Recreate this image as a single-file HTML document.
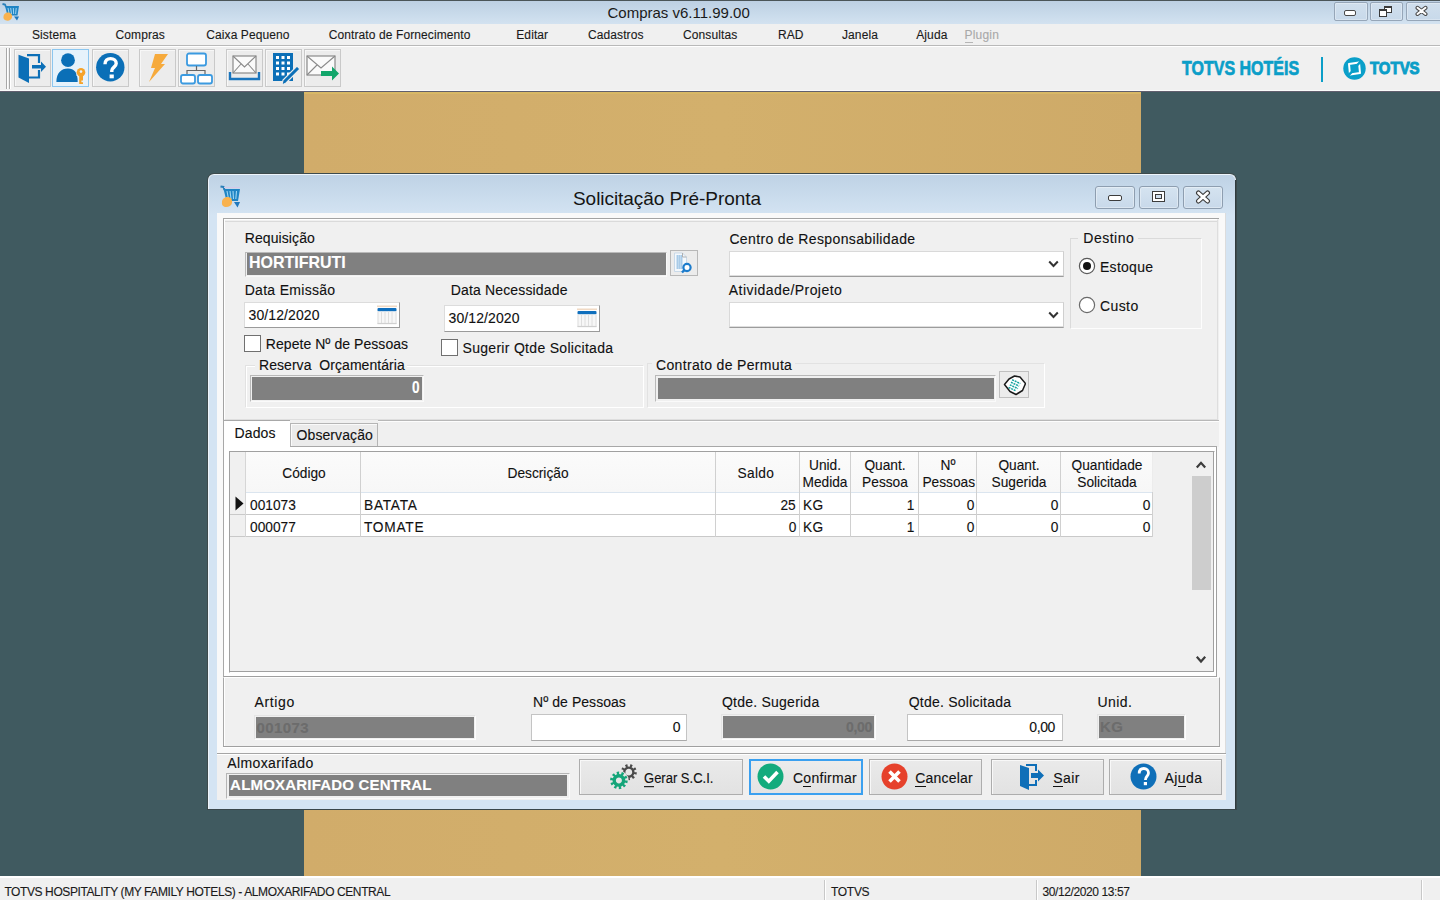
<!DOCTYPE html><html><head><meta charset="utf-8"><style>
html,body{margin:0;padding:0;width:1440px;height:900px;overflow:hidden;}
body{position:relative;background:#405a60;font-family:"Liberation Sans", sans-serif;}
.a{position:absolute;box-sizing:border-box;}
.t{position:absolute;white-space:pre;-webkit-text-stroke:0.12px currentColor;}
u{text-decoration:none;border-bottom:1px solid currentColor;}
</style></head><body>
<div class="a" style="left:304px;top:92px;width:837px;height:784px;background:linear-gradient(90deg,#d1ac6a,#d3b06c 50%,#ceaa68);"></div>
<div class="a" style="left:304px;top:92px;width:837px;height:2px;background:#d8b866;"></div>
<div class="a" style="left:0px;top:0px;width:1440px;height:24px;background:linear-gradient(180deg,#bccfe2 0%,#c9dbeb 60%,#d3e2f0 100%);"></div>
<div class="a" style="left:0px;top:0px;width:1440px;height:1px;background:#4b5558;"></div>
<svg class="a" style="left:2px;top:2px" width="18" height="19" viewBox="0 0 18 19"><path d="M0.5 2 L3 2.5 L4 5" stroke="#2a7fb8" stroke-width="1.8" fill="none"/>
<path d="M3 4 L17 4 L15.5 13.5 L5.5 13.5 Z" fill="#1f84c4"/>
<path d="M6 6 L7.2 12 M8.7 6 L9.5 12 M11.3 6 L11.7 12 M14.2 6 L13.6 12" stroke="#9fd6f2" stroke-width="1"/>
<path d="M1.5 14.5 C1.5 12 4 10 6.8 10.5 C9.5 11 10.5 13 10 15.5 C9.5 18 6.8 19 4.3 18.5 C2.2 18 1 16.5 1.5 14.5 Z" fill="#f9b24e"/>
<path d="M12 14.5 L17 14.5 L15 18.5 Z" fill="#1f78bd"/></svg>
<div class="t" style="left:607.50px;top:4.80px;font-size:15px;line-height:15px;color:#1a1a1a;-webkit-text-stroke:0;">Compras v6.11.99.00</div>
<div class="a" style="left:1334px;top:2px;width:34px;height:19px;border:1px solid #96a6b8;border-radius:2px;background:linear-gradient(180deg,#d0dfed,#c8d9ea);box-shadow:inset 0 0 0 1px rgba(255,255,255,0.3);"></div>
<div class="a" style="left:1344px;top:10px;width:12px;height:6px;border:1px solid #4a4a4a;border-radius:2px;background:#fff;"></div>
<div class="a" style="left:1370px;top:2px;width:33px;height:19px;border:1px solid #96a6b8;border-radius:2px;background:linear-gradient(180deg,#d0dfed,#c8d9ea);box-shadow:inset 0 0 0 1px rgba(255,255,255,0.3);"></div>
<div class="a" style="left:1384px;top:6px;width:8px;height:7px;border:1px solid #3a3a3a;background:#fff;border-top-width:2px;"></div><div class="a" style="left:1379px;top:9px;width:8px;height:8px;border:1px solid #3a3a3a;background:#fff;border-top-width:2px;"></div>
<div class="a" style="left:1406px;top:2px;width:36px;height:19px;border:1px solid #96a6b8;border-radius:2px;background:linear-gradient(180deg,#d0dfed,#c8d9ea);box-shadow:inset 0 0 0 1px rgba(255,255,255,0.3);"></div>

<svg class="a" style="left:1414px;top:5px" width="15" height="12" viewBox="0 0 15 12"><path d="M3.5 2.8 L11.5 9 M11.5 2.8 L3.5 9" stroke="#4a4a4a" stroke-width="4" stroke-linecap="round"/><path d="M3.5 2.8 L11.5 9 M11.5 2.8 L3.5 9" stroke="#fff" stroke-width="2" stroke-linecap="round"/></svg>
<div class="a" style="left:0px;top:24px;width:1440px;height:21px;background:#f0f0f0;"></div>
<div class="a" style="left:0px;top:45px;width:1440px;height:1px;background:#b9b9b9;"></div>
<div class="a" style="left:0px;top:46px;width:1440px;height:1px;background:#ffffff;"></div>
<div class="t" style="left:32.00px;top:28.74px;font-size:12px;line-height:12px;color:#1a1a1a;letter-spacing:0.1px;">Sistema</div>
<div class="t" style="left:115.50px;top:28.74px;font-size:12px;line-height:12px;color:#1a1a1a;letter-spacing:0.1px;">Compras</div>
<div class="t" style="left:206.25px;top:28.74px;font-size:12px;line-height:12px;color:#1a1a1a;letter-spacing:0.1px;">Caixa Pequeno</div>
<div class="t" style="left:328.75px;top:28.74px;font-size:12px;line-height:12px;color:#1a1a1a;letter-spacing:0.1px;">Contrato de Fornecimento</div>
<div class="t" style="left:516.25px;top:28.74px;font-size:12px;line-height:12px;color:#1a1a1a;letter-spacing:0.1px;">Editar</div>
<div class="t" style="left:588.00px;top:28.74px;font-size:12px;line-height:12px;color:#1a1a1a;letter-spacing:0.1px;">Cadastros</div>
<div class="t" style="left:683.00px;top:28.74px;font-size:12px;line-height:12px;color:#1a1a1a;letter-spacing:0.1px;">Consultas</div>
<div class="t" style="left:778.00px;top:28.74px;font-size:12px;line-height:12px;color:#1a1a1a;letter-spacing:0.1px;">RAD</div>
<div class="t" style="left:842.00px;top:28.74px;font-size:12px;line-height:12px;color:#1a1a1a;letter-spacing:0.1px;">Janela</div>
<div class="t" style="left:916.25px;top:28.74px;font-size:12px;line-height:12px;color:#1a1a1a;letter-spacing:0.1px;">Ajuda</div>
<div class="t" style="left:964.50px;top:28.74px;font-size:12px;line-height:12px;color:#a9a9a9;letter-spacing:0.2px;"><u style="border-color:#b5b5b5">P</u>lugin</div>
<div class="a" style="left:0px;top:47px;width:1440px;height:44px;background:#f0f0f0;"></div>
<div class="a" style="left:0px;top:90px;width:1440px;height:1px;background:#fafafa;"></div>
<div class="a" style="left:0px;top:91px;width:1440px;height:1px;background:#615f6e;"></div>
<div class="a" style="left:6px;top:48px;width:1px;height:41px;background:#a8a8a8;"></div>
<div class="a" style="left:7px;top:48px;width:1px;height:41px;background:#ffffff;"></div>
<div class="a" style="left:9px;top:48px;width:1px;height:41px;background:#a8a8a8;"></div>
<div class="a" style="left:10px;top:48px;width:1px;height:41px;background:#ffffff;"></div>
<div class="a" style="left:14px;top:49px;width:37px;height:38px;border:1px solid #c9c9c9;background:#ececec;box-shadow:inset 1px 1px 0 #f7f7f7;"></div>
<div class="a" style="left:52px;top:49px;width:37px;height:38px;border:1px solid #8cc6ef;background:#e6f2fb;"></div>
<div class="a" style="left:92px;top:49px;width:37px;height:38px;border:1px solid #c9c9c9;background:#ececec;box-shadow:inset 1px 1px 0 #f7f7f7;"></div>
<div class="a" style="left:139px;top:49px;width:37px;height:38px;border:1px solid #c9c9c9;background:#ececec;box-shadow:inset 1px 1px 0 #f7f7f7;"></div>
<div class="a" style="left:178px;top:49px;width:37px;height:38px;border:1px solid #c9c9c9;background:#ececec;box-shadow:inset 1px 1px 0 #f7f7f7;"></div>
<div class="a" style="left:226px;top:49px;width:37px;height:38px;border:1px solid #c9c9c9;background:#ececec;box-shadow:inset 1px 1px 0 #f7f7f7;"></div>
<div class="a" style="left:265px;top:49px;width:37px;height:38px;border:1px solid #c9c9c9;background:#ececec;box-shadow:inset 1px 1px 0 #f7f7f7;"></div>
<div class="a" style="left:304px;top:49px;width:37px;height:38px;border:1px solid #c9c9c9;background:#ececec;box-shadow:inset 1px 1px 0 #f7f7f7;"></div>
<svg class="a" style="left:14px;top:49px" width="37" height="38" viewBox="0 0 37 38"><path d="M4.5 5.7 L15 9.5 L15 34 L4.5 28.5 Z" fill="#0b6fb7"/>
<path d="M13 6.2 L25 6.2 L25 14 M25 21 L25 28.5 L15 28.5" fill="none" stroke="#0b6fb7" stroke-width="2.2"/>
<path d="M18 16 L27 16 L27 12.5 L32 17.8 L27 23 L27 19.6 L18 19.6 Z" fill="#0b6fb7"/></svg>
<svg class="a" style="left:52px;top:49px" width="37" height="38" viewBox="0 0 37 38"><circle cx="16" cy="11.2" r="6.9" fill="#0b6fb7"/>
<path d="M4.4 33 C4.4 24 9 19.5 16 19.5 C22 19.5 25.7 23 25.7 33 Z" fill="#0b6fb7"/>
<path d="M24.5 19 L33.5 19 L33.5 27 L24.5 27 Z" fill="#e6f2fb"/>
<circle cx="29" cy="23.2" r="4.3" fill="#f5a32a"/><circle cx="29" cy="22.6" r="1.3" fill="#e6f2fb"/>
<path d="M27.2 26 L27.2 35 L31 35 L31 33.2 L29.4 33.2 L29.4 31.6 L31 31.6 L31 26 Z" fill="#f5a32a"/></svg>
<svg class="a" style="left:92px;top:49px" width="37" height="38" viewBox="0 0 37 38"><circle cx="18.3" cy="18.3" r="14.2" fill="#0b6fb7"/>
<path d="M13 15.2 C13 11.6 15.3 9.6 18.6 9.6 C21.9 9.6 24.2 11.8 24.2 14.6 C24.2 17.8 19.8 18.4 19.8 21.6 L19.8 23" fill="none" stroke="#fff" stroke-width="3.4"/>
<rect x="17.6" y="25.5" width="4.2" height="3.8" fill="#fff"/></svg>
<svg class="a" style="left:139px;top:49px" width="37" height="38" viewBox="0 0 37 38"><path d="M16 5 L29 5 L22 15 L26 15 L10 33 L16 19 L12 19 Z" fill="#f6aa3c"/></svg>
<svg class="a" style="left:178px;top:49px" width="37" height="38" viewBox="0 0 37 38"><rect x="9" y="4.5" width="19" height="12" rx="2" fill="#fff" stroke="#3b9ae0" stroke-width="1.8"/>
<path d="M18.5 17 L18.5 21 M9 25 L9 21.5 L27 21.5 L27 25" fill="none" stroke="#666" stroke-width="1.2"/>
<rect x="3" y="26" width="14" height="8.5" rx="2" fill="#fff" stroke="#3b9ae0" stroke-width="1.8"/>
<rect x="20" y="26" width="14" height="8.5" rx="2" fill="#fff" stroke="#3b9ae0" stroke-width="1.8"/></svg>
<svg class="a" style="left:226px;top:49px" width="37" height="38" viewBox="0 0 37 38"><rect x="7" y="7" width="23" height="17" fill="#fafafa" stroke="#8a8a8a" stroke-width="1.2"/>
<path d="M7 7 L18.5 18 L30 7 M7 24 L15 15 M30 24 L22 15" fill="none" stroke="#8a8a8a" stroke-width="1.1"/>
<path d="M4 23 L4 30 L33 30 L33 23" fill="none" stroke="#1a75bd" stroke-width="2.4"/></svg>
<svg class="a" style="left:265px;top:49px" width="37" height="38" viewBox="0 0 37 38"><rect x="8" y="4" width="20" height="28" fill="#0b6fb7"/>
<g fill="#fff"><rect x="11.0" y="7.0" width="3" height="3"/><rect x="16.5" y="7.0" width="3" height="3"/><rect x="22.0" y="7.0" width="3" height="3"/><rect x="11.0" y="12.5" width="3" height="3"/><rect x="16.5" y="12.5" width="3" height="3"/><rect x="22.0" y="12.5" width="3" height="3"/><rect x="11.0" y="18.0" width="3" height="3"/><rect x="16.5" y="18.0" width="3" height="3"/><rect x="22.0" y="18.0" width="3" height="3"/><rect x="11.0" y="23.5" width="3" height="3"/><rect x="16.5" y="23.5" width="3" height="3"/><rect x="22.0" y="23.5" width="3" height="3"/></g>
<path d="M17 36 L18 31 L32 17 L35 20 L21 34 Z" fill="#0b6fb7" stroke="#ececec" stroke-width="1.2"/></svg>
<svg class="a" style="left:304px;top:49px" width="37" height="38" viewBox="0 0 37 38"><rect x="3" y="7" width="28" height="19" fill="#fafafa" stroke="#8a8a8a" stroke-width="1.2"/>
<path d="M3 7 L17 19 L31 7 M3 26 L13 16" fill="none" stroke="#8a8a8a" stroke-width="1.1"/>
<path d="M17 22 L28 22 L28 17.5 L35 24.5 L28 31.5 L28 27 L17 27 Z" fill="#12a66b"/></svg>
<div class="t" style="left:1182.00px;top:58.37px;font-size:20px;line-height:20px;color:#0b9ec8;font-weight:700;transform:scaleX(0.80);transform-origin:0 0;-webkit-text-stroke:0.7px currentColor;">TOTVS HOTÉIS</div>
<div class="a" style="left:1321px;top:57px;width:2px;height:25px;background:#0b9ec8;"></div>
<svg class="a" style="left:1343px;top:57px" width="23" height="23" viewBox="0 0 23 23"><circle cx="11.5" cy="11.5" r="11.2" fill="#0a9fc9"/><path d="M6 7 L16 5.5 L17 16 L7 17.5 Z" fill="none" stroke="#fff" stroke-width="2" stroke-linejoin="round"/><path d="M8.6 9.2 L14 8.4 L14.6 13.6 L9.2 14.4 Z" fill="#0a9fc9"/><path d="M18.5 3.5 L14.5 8 M4.5 19.5 L8.5 15" stroke="#0a9fc9" stroke-width="2.6"/></svg>
<div class="t" style="left:1370.40px;top:60.11px;font-size:17px;line-height:17px;color:#0b9ec8;font-weight:700;transform:scaleX(0.88);transform-origin:0 0;-webkit-text-stroke:1px currentColor;">TOTVS</div>
<div class="a" style="left:0px;top:876px;width:1440px;height:24px;background:#f0f0f0;"></div>
<div class="a" style="left:0px;top:876px;width:1440px;height:2px;background:#ffffff;"></div>
<div class="t" style="left:4.40px;top:885.64px;font-size:12px;line-height:12px;color:#1a1a1a;letter-spacing:-0.4px;">TOTVS HOSPITALITY (MY FAMILY HOTELS) - ALMOXARIFADO CENTRAL</div>
<div class="a" style="left:824px;top:880px;width:1px;height:20px;background:#c8c8c8;"></div>
<div class="a" style="left:825px;top:880px;width:1px;height:20px;background:#fff;"></div>
<div class="a" style="left:1036px;top:880px;width:1px;height:20px;background:#c8c8c8;"></div>
<div class="a" style="left:1037px;top:880px;width:1px;height:20px;background:#fff;"></div>
<div class="a" style="left:1421px;top:880px;width:1px;height:20px;background:#c8c8c8;"></div>
<div class="a" style="left:1422px;top:880px;width:1px;height:20px;background:#fff;"></div>
<div class="t" style="left:831.00px;top:885.64px;font-size:12px;line-height:12px;color:#1a1a1a;letter-spacing:-0.3px;">TOTVS</div>
<div class="t" style="left:1042.50px;top:885.64px;font-size:12px;line-height:12px;color:#1a1a1a;letter-spacing:-0.4px;">30/12/2020 13:57</div>
<div class="a" style="left:207px;top:173px;width:1030px;height:637px;border-radius:7px 7px 0 0;background:#3d4a4c;"></div>
<div class="a" style="left:208px;top:174px;width:1028px;height:635px;border-radius:6px 6px 0 0;background:linear-gradient(180deg,#bfd2e5 0px,#c9dbec 20px,#d3e3f2 39px,#d4e4f3 40px);border:1px solid #eef5fb;border-bottom:none;"></div>
<div class="a" style="left:1235px;top:180px;width:1px;height:629px;background:#2f3b3e;"></div>
<div class="a" style="left:207px;top:809px;width:1030px;height:1px;background:#3a474b;"></div>
<svg class="a" style="left:220px;top:184px" width="21" height="24" viewBox="0 0 21 24"><path d="M0.5 2.5 L3.5 3 L4.5 6" stroke="#2a7fb8" stroke-width="2" fill="none"/>
<path d="M3.5 5 L20 5 L18 17 L6.5 17 Z" fill="#1f84c4"/>
<path d="M7 7 L8.5 15 M10 7 L11 15 M13 7 L13.5 15 M16.5 7 L15.8 15" stroke="#9fd6f2" stroke-width="1.1"/>
<path d="M4 3.5 L20 3.5" stroke="#d6c8e8" stroke-width="1"/>
<path d="M2 18 C2 15 5 12.5 8 13 C11.5 13.5 12.5 16 12 19 C11.5 22 8 23.5 5 23 C2.5 22.5 1.5 20.5 2 18 Z" fill="#f9b24e"/>
<path d="M14 18 L20 18 L17.5 23.5 Z" fill="#1f78bd"/></svg>
<div class="t" style="left:573.00px;top:188.92px;font-size:19px;line-height:19px;color:#151515;letter-spacing:-0.05px;-webkit-text-stroke:0;">Solicitação Pré-Pronta</div>
<div class="a" style="left:1095px;top:186px;width:40px;height:23px;border:1px solid #8e9eb0;border-radius:3px;background:linear-gradient(180deg,#d5e3f0,#c8d9ea);box-shadow:inset 0 0 0 1px rgba(255,255,255,0.35);"></div>
<div class="a" style="left:1108px;top:195px;width:14px;height:6px;border:1px solid #3c3c3c;border-radius:2px;background:#fff;"></div>
<div class="a" style="left:1139px;top:186px;width:40px;height:23px;border:1px solid #8e9eb0;border-radius:3px;background:linear-gradient(180deg,#d5e3f0,#c8d9ea);box-shadow:inset 0 0 0 1px rgba(255,255,255,0.35);"></div>
<div class="a" style="left:1152px;top:191px;width:13px;height:11px;border:1px solid #3c3c3c;background:#fff;"></div><div class="a" style="left:1155px;top:194px;width:7px;height:5px;border:1px solid #3c3c3c;background:#d0dfee;"></div>
<div class="a" style="left:1183px;top:186px;width:40px;height:23px;border:1px solid #8e9eb0;border-radius:3px;background:linear-gradient(180deg,#d5e3f0,#c8d9ea);box-shadow:inset 0 0 0 1px rgba(255,255,255,0.35);"></div>

<svg class="a" style="left:1195px;top:190px" width="16" height="14" viewBox="0 0 16 14"><path d="M3.5 3 L12.5 11 M12.5 3 L3.5 11" stroke="#3c3c3c" stroke-width="5" stroke-linecap="round"/><path d="M3.5 3 L12.5 11 M12.5 3 L3.5 11" stroke="#fff" stroke-width="2.8" stroke-linecap="round"/></svg>
<div class="a" style="left:217px;top:213px;width:1009px;height:587px;background:#f0f0f0;"></div>
<div class="a" style="left:217px;top:213px;width:1009px;height:540px;background:#f9f9f9;"></div>
<div class="a" style="left:1225px;top:213px;width:1px;height:540px;background:#dcdcdc;"></div>
<div class="a" style="left:223px;top:218px;width:996px;height:229px;background:#f0f0f0;border-left:1px solid #a3a3a3;border-top:1px solid #a3a3a3;"></div>
<div class="a" style="left:224px;top:219px;width:994px;height:201px;border-left:1px solid #fff;border-top:1px solid #fff;border-right:1px solid #dedede;border-bottom:1px solid #dedede;"></div>
<div class="a" style="left:225px;top:221px;width:992px;height:1px;background:#dadada;"></div>
<div class="t" style="left:244.70px;top:231.45px;font-size:14px;line-height:14px;color:#111;letter-spacing:0.1px;">Requisição</div>
<div class="a" style="left:245px;top:252px;width:422px;height:25px;border:1px solid #b9b9b9;border-right-color:#f8f8f8;border-bottom-color:#f8f8f8;"></div>
<div class="a" style="left:247px;top:253px;width:419px;height:22px;background:#808080;"></div>
<div class="t" style="left:248.75px;top:254.01px;font-size:17px;line-height:17px;color:#fff;font-weight:700;transform:scaleX(0.94);transform-origin:0 0;">HORTIFRUTI</div>
<div class="a" style="left:670px;top:250px;width:28px;height:26px;border:1px solid #b8b8b8;background:#ececec;"></div>
<svg class="a" style="left:673px;top:252px" width="22" height="22" viewBox="0 0 22 22"><path d="M1.5 1 L9.5 1 L13.5 5 L13.5 19.5 L1.5 19.5 Z" fill="#f4f8fc" stroke="#c9d9e8" stroke-width="1"/>
<rect x="3.5" y="3" width="6" height="14" fill="#a9cbe8"/><path d="M5.5 3v14M7.5 3v14" stroke="#c4dcf0" stroke-width="0.8"/>
<path d="M9.5 1 L9.5 5 L13.5 5" fill="none" stroke="#b0b0b0" stroke-width="1"/>
<circle cx="14" cy="15.5" r="3.6" fill="#fff" stroke="#1d7ccc" stroke-width="2.2"/><path d="M11.3 18.2 L9 20.5" stroke="#1d7ccc" stroke-width="2.4"/></svg>
<div class="t" style="left:244.70px;top:283.45px;font-size:14px;line-height:14px;color:#111;letter-spacing:0.3px;">Data Emissão</div>
<div class="a" style="left:244px;top:302px;width:156px;height:26px;background:#fff;border:1px solid #dcdcdc;border-right-color:#9a9a9a;border-bottom-color:#9a9a9a;"></div>
<div class="t" style="left:248.50px;top:307.95px;font-size:14px;line-height:14px;color:#111;letter-spacing:0.1px;">30/12/2020</div>
<svg class="a" style="left:377px;top:305px" width="20" height="20" viewBox="0 0 20 20"><rect x="0" y="0.5" width="20" height="1.6" fill="#f0d9c4"/>
<rect x="0.5" y="3" width="19" height="3.4" rx="1" fill="#0f6fbd"/>
<rect x="0.5" y="6.4" width="19" height="13" fill="#f7f7f7"/>
<path d="M1 6.5V19M4.5 6.5V19M8 6.5V19M11.5 6.5V19M15 6.5V19M19 6.5V19" stroke="#dedede" stroke-width="1"/>
<path d="M0.5 18.5H19.5" stroke="#d0d0d0" stroke-width="1.2"/></svg>
<div class="t" style="left:450.80px;top:283.45px;font-size:14px;line-height:14px;color:#111;letter-spacing:0.15px;">Data Necessidade</div>
<div class="a" style="left:444px;top:305px;width:156px;height:27px;background:#fff;border:1px solid #dcdcdc;border-right-color:#9a9a9a;border-bottom-color:#9a9a9a;"></div>
<div class="t" style="left:448.50px;top:310.95px;font-size:14px;line-height:14px;color:#111;letter-spacing:0.1px;">30/12/2020</div>
<svg class="a" style="left:577px;top:308px" width="20" height="20" viewBox="0 0 20 20"><rect x="0" y="0.5" width="20" height="1.6" fill="#f0d9c4"/>
<rect x="0.5" y="3" width="19" height="3.4" rx="1" fill="#0f6fbd"/>
<rect x="0.5" y="6.4" width="19" height="13" fill="#f7f7f7"/>
<path d="M1 6.5V19M4.5 6.5V19M8 6.5V19M11.5 6.5V19M15 6.5V19M19 6.5V19" stroke="#dedede" stroke-width="1"/>
<path d="M0.5 18.5H19.5" stroke="#d0d0d0" stroke-width="1.2"/></svg>
<div class="a" style="left:244px;top:335px;width:17px;height:17px;border:1px solid #707070;background:#fff;"></div>
<div class="t" style="left:265.80px;top:337.35px;font-size:14px;line-height:14px;color:#111;letter-spacing:0.05px;">Repete Nº de Pessoas</div>
<div class="a" style="left:441px;top:339px;width:17px;height:17px;border:1px solid #707070;background:#fff;"></div>
<div class="t" style="left:462.50px;top:341.15px;font-size:14px;line-height:14px;color:#111;letter-spacing:0.3px;">Sugerir Qtde Solicitada</div>
<div class="a" style="left:245px;top:365px;width:399px;height:43px;border:1px solid #e2e2e2;border-right-color:#fff;border-bottom-color:#fff;box-shadow:1px 1px 0 #fff inset;"></div>
<div class="a" style="left:255px;top:360px;width:152px;height:8px;background:#f0f0f0;"></div>
<div class="t" style="left:259.00px;top:357.85px;font-size:14px;line-height:14px;color:#111;letter-spacing:0.05px;">Reserva  Orçamentária</div>
<div class="a" style="left:250px;top:375px;width:174px;height:27px;border:1px solid #b9b9b9;border-right-color:#fafafa;border-bottom-color:#fafafa;"></div>
<div class="a" style="left:252px;top:377px;width:170px;height:23px;background:#808080;"></div>
<div class="t" style="right:1020.50px;top:378.61px;font-size:17px;line-height:17px;color:#fff;font-weight:700;transform:scaleX(0.8);transform-origin:100% 0;">0</div>
<div class="a" style="left:647px;top:363px;width:398px;height:45px;border:1px solid #e2e2e2;border-right-color:#fff;border-bottom-color:#fff;"></div>
<div class="a" style="left:652px;top:358px;width:143px;height:8px;background:#f0f0f0;"></div>
<div class="t" style="left:656.00px;top:358.15px;font-size:14px;line-height:14px;color:#111;letter-spacing:0.33px;">Contrato de Permuta</div>
<div class="a" style="left:655px;top:375px;width:341px;height:27px;border:1px solid #b9b9b9;border-right-color:#fafafa;border-bottom-color:#fafafa;"></div>
<div class="a" style="left:658px;top:378px;width:336px;height:21px;background:#808080;"></div>
<div class="a" style="left:999px;top:371px;width:30px;height:27px;border:1px solid #c0c0c0;background:#ececec;"></div>
<svg class="a" style="left:1002px;top:373px" width="24" height="23" viewBox="0 0 24 23"><path d="M2.5 11.5 L7 6 L12.5 3 L18 4 L23.5 10.5 L20.5 17.5 L14 21.5 L8 18.5 Z" fill="#fff" stroke="#1a1a1a" stroke-width="1.5" stroke-linejoin="round"/>
<g transform="rotate(25 13 12.5)"><path d="M8 8.5h9M8 11.3h9M8 14.1h9M8 16.9h8" stroke="#14a3a0" stroke-width="1.5" stroke-dasharray="2 0.8"/></g></svg>
<div class="t" style="left:729.40px;top:231.90px;font-size:14px;line-height:14px;color:#111;letter-spacing:0.36px;">Centro de Responsabilidade</div>
<div class="a" style="left:729px;top:251px;width:335px;height:26px;background:#fff;border:1px solid #d9d9d9;border-bottom:1px solid #9c9c9c;border-right-color:#cfcfcf;box-shadow:inset 0 -1px 0 #dedede;"></div>
<svg class="a" style="left:1048px;top:260px" width="11" height="8" viewBox="0 0 11 8"><path d="M1.2 1.5 L5.5 6 L9.8 1.5" fill="none" stroke="#333" stroke-width="2"/></svg>
<div class="t" style="left:728.75px;top:282.65px;font-size:14px;line-height:14px;color:#111;letter-spacing:0.45px;">Atividade/Projeto</div>
<div class="a" style="left:729px;top:302px;width:335px;height:26px;background:#fff;border:1px solid #d9d9d9;border-bottom:1px solid #9c9c9c;border-right-color:#cfcfcf;box-shadow:inset 0 -1px 0 #dedede;"></div>
<svg class="a" style="left:1048px;top:311px" width="11" height="8" viewBox="0 0 11 8"><path d="M1.2 1.5 L5.5 6 L9.8 1.5" fill="none" stroke="#333" stroke-width="2"/></svg>
<div class="a" style="left:1070px;top:238px;width:132px;height:91px;border:1px solid #dadada;border-right-color:#fdfdfd;border-bottom-color:#fdfdfd;"></div>
<div class="a" style="left:1078px;top:232px;width:60px;height:10px;background:#f0f0f0;"></div>
<div class="t" style="left:1083.30px;top:231.45px;font-size:14px;line-height:14px;color:#111;letter-spacing:0.5px;">Destino</div>
<svg class="a" style="left:1078px;top:257px" width="18" height="18" viewBox="0 0 18 18"><circle cx="9" cy="9" r="7.6" fill="#fff" stroke="#5a5a5a" stroke-width="1.2"/><circle cx="9" cy="9" r="4" fill="#111"/></svg>
<div class="t" style="left:1100.00px;top:260.35px;font-size:14px;line-height:14px;color:#111;letter-spacing:0.27px;">Estoque</div>
<svg class="a" style="left:1078px;top:296px" width="18" height="18" viewBox="0 0 18 18"><circle cx="9" cy="9" r="7.6" fill="#fff" stroke="#6a6a6a" stroke-width="1.2"/></svg>
<div class="t" style="left:1100.00px;top:298.85px;font-size:14px;line-height:14px;color:#111;letter-spacing:0.4px;">Custo</div>
<div class="a" style="left:223px;top:420px;width:67px;height:28px;background:#fff;border-left:1px solid #a8a8a8;border-top:1px solid #a8a8a8;"></div>
<div class="t" style="left:234.60px;top:426.05px;font-size:14px;line-height:14px;color:#111;letter-spacing:0.1px;">Dados</div>
<div class="a" style="left:290px;top:423px;width:88px;height:24px;background:#ebebeb;border:1px solid #b5b5b5;border-bottom:none;box-shadow:inset 1px 1px 0 #fafafa;"></div>
<div class="t" style="left:296.50px;top:428.45px;font-size:14px;line-height:14px;color:#111;letter-spacing:0.1px;">Observação</div>
<div class="a" style="left:290px;top:446px;width:927px;height:1px;background:#a8a8a8;"></div>
<div class="a" style="left:378px;top:420px;width:841px;height:1px;background:#b8b8b8;"></div>
<div class="a" style="left:378px;top:421px;width:841px;height:1px;background:#fdfdfd;"></div>
<div class="a" style="left:223px;top:447px;width:994px;height:230px;background:#fff;border-left:1px solid #a8a8a8;border-right:1px solid #a0a0a0;border-bottom:1px solid #a0a0a0;"></div>
<div class="a" style="left:229px;top:451px;width:986px;height:222px;background:#f0f0f0;border:1px solid #a0a0a0;border-right-color:#fff;border-bottom-color:#fff;box-shadow:inset -1px -1px 0 #a0a0a0;"></div>
<div class="a" style="left:246px;top:452px;width:907px;height:40px;background:linear-gradient(180deg,#fbfbfb,#f7f7f7);"></div>
<div class="a" style="left:246px;top:492px;width:907px;height:1px;background:#dbe5ef;"></div>
<div class="a" style="left:230px;top:492px;width:16px;height:45px;background:#f0f0f0;"></div>
<div class="a" style="left:246px;top:493px;width:907px;height:44px;background:#fff;"></div>
<div class="a" style="left:230px;top:514px;width:923px;height:1px;background:#c9c9c9;"></div>
<div class="a" style="left:230px;top:536px;width:923px;height:1px;background:#c9c9c9;"></div>
<div class="a" style="left:360px;top:452px;width:1px;height:85px;background:#d0d0d0;"></div>
<div class="a" style="left:714.5px;top:452px;width:1px;height:85px;background:#d0d0d0;"></div>
<div class="a" style="left:798.5px;top:452px;width:1px;height:85px;background:#d0d0d0;"></div>
<div class="a" style="left:849.5px;top:452px;width:1px;height:85px;background:#d0d0d0;"></div>
<div class="a" style="left:917.5px;top:452px;width:1px;height:85px;background:#d0d0d0;"></div>
<div class="a" style="left:975.5px;top:452px;width:1px;height:85px;background:#d0d0d0;"></div>
<div class="a" style="left:1060px;top:452px;width:1px;height:85px;background:#d0d0d0;"></div>
<div class="a" style="left:1152px;top:452px;width:1px;height:85px;background:#d0d0d0;"></div>
<div class="a" style="left:1152px;top:452px;width:1px;height:40px;background:#ececec;"></div>
<div class="a" style="left:245px;top:452px;width:1px;height:85px;background:#d6d6d6;"></div>
<div class="t" style="left:248.50px;width:110px;text-align:center;top:465.10px;font-size:15px;line-height:15px;color:#111;transform:scaleX(0.915);transform-origin:50% 0;">Código</div>
<div class="t" style="left:368.00px;width:340px;text-align:center;top:465.10px;font-size:15px;line-height:15px;color:#111;transform:scaleX(0.915);transform-origin:50% 0;">Descrição</div>
<div class="t" style="right:665.80px;top:465.10px;font-size:15px;line-height:15px;color:#111;letter-spacing:0.4px;transform:scaleX(0.915);transform-origin:100% 0;">Saldo</div>
<div class="t" style="left:800.00px;width:50px;text-align:center;top:457.30px;font-size:15px;line-height:15px;color:#111;transform:scaleX(0.915);transform-origin:50% 0;">Unid.</div>
<div class="t" style="left:800.00px;width:50px;text-align:center;top:474.00px;font-size:15px;line-height:15px;color:#111;transform:scaleX(0.915);transform-origin:50% 0;">Medida</div>
<div class="t" style="left:851.60px;width:66px;text-align:center;top:457.30px;font-size:15px;line-height:15px;color:#111;transform:scaleX(0.915);transform-origin:50% 0;">Quant.</div>
<div class="t" style="left:851.60px;width:66px;text-align:center;top:474.00px;font-size:15px;line-height:15px;color:#111;transform:scaleX(0.915);transform-origin:50% 0;">Pessoa</div>
<div class="t" style="left:920.00px;width:56px;text-align:center;top:457.30px;font-size:15px;line-height:15px;color:#111;transform:scaleX(0.915);transform-origin:50% 0;">Nº</div>
<div class="t" style="left:920.00px;width:56px;text-align:center;top:474.00px;font-size:15px;line-height:15px;color:#111;transform:scaleX(0.915);transform-origin:50% 0;">Pessoas</div>
<div class="t" style="left:977.70px;width:82px;text-align:center;top:457.30px;font-size:15px;line-height:15px;color:#111;transform:scaleX(0.915);transform-origin:50% 0;">Quant.</div>
<div class="t" style="left:977.70px;width:82px;text-align:center;top:474.00px;font-size:15px;line-height:15px;color:#111;transform:scaleX(0.915);transform-origin:50% 0;">Sugerida</div>
<div class="t" style="left:1061.50px;width:90px;text-align:center;top:457.30px;font-size:15px;line-height:15px;color:#111;transform:scaleX(0.915);transform-origin:50% 0;">Quantidade</div>
<div class="t" style="left:1061.50px;width:90px;text-align:center;top:474.00px;font-size:15px;line-height:15px;color:#111;transform:scaleX(0.915);transform-origin:50% 0;">Solicitada</div>
<div class="t" style="left:250.00px;top:497.30px;font-size:15px;line-height:15px;color:#111;transform:scaleX(0.915);transform-origin:0 0;">001073</div>
<div class="t" style="left:364.20px;top:497.30px;font-size:15px;line-height:15px;color:#111;letter-spacing:0.8px;transform:scaleX(0.915);transform-origin:0 0;">BATATA</div>
<div class="t" style="right:644.00px;top:497.30px;font-size:15px;line-height:15px;color:#111;transform:scaleX(0.915);transform-origin:100% 0;">25</div>
<div class="t" style="left:802.80px;top:497.30px;font-size:15px;line-height:15px;color:#111;letter-spacing:0.4px;transform:scaleX(0.915);transform-origin:0 0;">KG</div>
<div class="t" style="right:525.50px;top:497.30px;font-size:15px;line-height:15px;color:#111;transform:scaleX(0.915);transform-origin:100% 0;">1</div>
<div class="t" style="right:466.00px;top:497.30px;font-size:15px;line-height:15px;color:#111;transform:scaleX(0.915);transform-origin:100% 0;">0</div>
<div class="t" style="right:382.00px;top:497.30px;font-size:15px;line-height:15px;color:#111;transform:scaleX(0.915);transform-origin:100% 0;">0</div>
<div class="t" style="right:290.00px;top:497.30px;font-size:15px;line-height:15px;color:#111;transform:scaleX(0.915);transform-origin:100% 0;">0</div>
<div class="t" style="left:250.00px;top:518.90px;font-size:15px;line-height:15px;color:#111;transform:scaleX(0.915);transform-origin:0 0;">000077</div>
<div class="t" style="left:364.20px;top:518.90px;font-size:15px;line-height:15px;color:#111;letter-spacing:0.8px;transform:scaleX(0.915);transform-origin:0 0;">TOMATE</div>
<div class="t" style="right:644.00px;top:518.90px;font-size:15px;line-height:15px;color:#111;transform:scaleX(0.915);transform-origin:100% 0;">0</div>
<div class="t" style="left:802.80px;top:518.90px;font-size:15px;line-height:15px;color:#111;letter-spacing:0.4px;transform:scaleX(0.915);transform-origin:0 0;">KG</div>
<div class="t" style="right:525.50px;top:518.90px;font-size:15px;line-height:15px;color:#111;transform:scaleX(0.915);transform-origin:100% 0;">1</div>
<div class="t" style="right:466.00px;top:518.90px;font-size:15px;line-height:15px;color:#111;transform:scaleX(0.915);transform-origin:100% 0;">0</div>
<div class="t" style="right:382.00px;top:518.90px;font-size:15px;line-height:15px;color:#111;transform:scaleX(0.915);transform-origin:100% 0;">0</div>
<div class="t" style="right:290.00px;top:518.90px;font-size:15px;line-height:15px;color:#111;transform:scaleX(0.915);transform-origin:100% 0;">0</div>
<svg class="a" style="left:235px;top:496px" width="9" height="15" viewBox="0 0 9 15"><path d="M0.5 0.5 L8.5 7.5 L0.5 14.5 Z" fill="#111"/></svg>
<div class="a" style="left:1191px;top:452px;width:22px;height:219px;background:#f0f0f0;"></div>
<div class="a" style="left:1192px;top:476px;width:19px;height:114px;background:#cdcdcd;"></div>
<svg class="a" style="left:1195px;top:459px" width="13" height="11" viewBox="0 0 13 11"><path d="M1.8 8.5 L6 3.8 L10.2 8.5" fill="none" stroke="#3c3c3c" stroke-width="2.2"/></svg>
<svg class="a" style="left:1195px;top:654px" width="13" height="11" viewBox="0 0 13 11"><path d="M1.8 2.8 L6 7.5 L10.2 2.8" fill="none" stroke="#3c3c3c" stroke-width="2.2"/></svg>
<div class="a" style="left:223px;top:677px;width:997px;height:70px;background:#f0f0f0;border:1px solid #a8a8a8;border-top-color:#fff;border-right-color:#a8a8a8;box-shadow:inset 1px 0 0 #fff;"></div>
<div class="a" style="left:223px;top:746px;width:997px;height:1px;background:#a0a0a0;"></div>
<div class="a" style="left:223px;top:747px;width:997px;height:1px;background:#fff;"></div>
<div class="t" style="left:254.60px;top:695.45px;font-size:14px;line-height:14px;color:#111;letter-spacing:0.6px;">Artigo</div>
<div class="a" style="left:254px;top:715px;width:222px;height:25px;border:1px solid #e4e4e4;border-right-color:#fdfdfd;border-bottom-color:#fdfdfd;"></div>
<div class="a" style="left:256px;top:717px;width:218px;height:21px;background:#808080;"></div>
<div class="t" style="left:256.50px;top:719.80px;font-size:15px;line-height:15px;color:#6c6c6c;font-weight:700;letter-spacing:0.4px;">001073</div>
<div class="t" style="left:533.00px;top:695.15px;font-size:14px;line-height:14px;color:#111;letter-spacing:0.05px;">Nº de Pessoas</div>
<div class="a" style="left:531px;top:714px;width:156px;height:27px;background:#fff;border:1px solid #c4c4c4;border-bottom-color:#a9a9a9;"></div>
<div class="t" style="right:759.50px;top:719.65px;font-size:14px;line-height:14px;color:#111;">0</div>
<div class="t" style="left:722.00px;top:695.15px;font-size:14px;line-height:14px;color:#111;letter-spacing:0.23px;">Qtde. Sugerida</div>
<div class="a" style="left:720.5px;top:714px;width:155px;height:26px;border:1px solid #e4e4e4;border-right-color:#fdfdfd;border-bottom-color:#fdfdfd;"></div>
<div class="a" style="left:722.5px;top:716px;width:151px;height:22px;background:#808080;"></div>
<div class="t" style="right:568.00px;top:719.65px;font-size:14px;line-height:14px;color:#6c6c6c;font-weight:700;letter-spacing:-0.3px;">0,00</div>
<div class="t" style="left:908.75px;top:695.15px;font-size:14px;line-height:14px;color:#111;letter-spacing:0.23px;">Qtde. Solicitada</div>
<div class="a" style="left:907px;top:714px;width:156px;height:27px;background:#fff;border:1px solid #c4c4c4;border-bottom-color:#a9a9a9;"></div>
<div class="t" style="right:385.00px;top:719.65px;font-size:14px;line-height:14px;color:#111;letter-spacing:-0.4px;">0,00</div>
<div class="t" style="left:1097.50px;top:695.15px;font-size:14px;line-height:14px;color:#111;letter-spacing:0.4px;">Unid.</div>
<div class="a" style="left:1097px;top:714px;width:89px;height:26px;border:1px solid #e4e4e4;border-right-color:#fdfdfd;border-bottom-color:#fdfdfd;"></div>
<div class="a" style="left:1099px;top:716px;width:85px;height:22px;background:#808080;"></div>
<div class="t" style="left:1100.00px;top:719.30px;font-size:15px;line-height:15px;color:#6c6c6c;font-weight:700;letter-spacing:0.3px;">KG</div>
<div class="a" style="left:217px;top:753px;width:1009px;height:1px;background:#a5a5a5;"></div>
<div class="a" style="left:217px;top:754px;width:1009px;height:1px;background:#fff;"></div>
<div class="t" style="left:227.20px;top:756.45px;font-size:14px;line-height:14px;color:#111;letter-spacing:0.4px;">Almoxarifado</div>
<div class="a" style="left:226px;top:773px;width:344px;height:26px;border:1px solid #b5b5b5;border-right-color:#fafafa;border-bottom-color:#fafafa;"></div>
<div class="a" style="left:229px;top:775px;width:338px;height:21px;background:#808080;"></div>
<div class="t" style="left:230.10px;top:776.70px;font-size:15px;line-height:15px;color:#fff;font-weight:700;letter-spacing:0.2px;">ALMOXARIFADO CENTRAL</div>
<div class="a" style="left:579px;top:759px;width:164px;height:36px;border:1px solid #adadad;background:linear-gradient(180deg,#eaeaea,#e2e2e2);box-shadow:inset 1px 1px 0 #f8f8f8;"></div>
<svg class="a" style="left:607px;top:762px" width="33" height="30" viewBox="0 0 33 30"><g transform="translate(21.8 10.2)"><circle r="6.6" fill="none" stroke="#4a4a4a" stroke-width="2.8" stroke-dasharray="2.1 2.5"/><circle r="4.6" fill="none" stroke="#4a4a4a" stroke-width="2.4"/></g>
<circle cx="11.9" cy="18.4" r="9.8" fill="#e6e6e6"/>
<g transform="translate(11.9 18.4)"><circle r="7.2" fill="none" stroke="#14a579" stroke-width="3.2" stroke-dasharray="2.3 2.22"/><circle r="4.7" fill="none" stroke="#14a579" stroke-width="3.4"/></g></svg>
<div class="t" style="left:644.00px;top:772.30px;font-size:13px;line-height:13px;color:#111;transform:scaleY(1.1);transform-origin:0 100%;"><u>G</u>erar S.C.I.</div>
<div class="a" style="left:749px;top:759px;width:114px;height:36px;border:2px solid #3aa0f0;background:linear-gradient(180deg,#ececec,#e3e3e3);"></div>
<svg class="a" style="left:757px;top:763px" width="27" height="27" viewBox="0 0 27 27"><circle cx="13.5" cy="13.5" r="13" fill="#13ab7d"/><path d="M7 13.5 L11.8 18.2 L20.5 9" fill="none" stroke="#fff" stroke-width="3.6"/></svg>
<div class="t" style="left:792.90px;top:771.45px;font-size:14px;line-height:14px;color:#111;letter-spacing:0.3px;">C<u>o</u>nfirmar</div>
<div class="a" style="left:869px;top:759px;width:113px;height:36px;border:1px solid #adadad;background:linear-gradient(180deg,#eaeaea,#e2e2e2);box-shadow:inset 1px 1px 0 #f8f8f8;"></div>
<svg class="a" style="left:881px;top:763px" width="27" height="27" viewBox="0 0 27 27"><circle cx="13.5" cy="13.5" r="13" fill="#e6412b"/><path d="M8.5 8.5 L18.5 18.5 M18.5 8.5 L8.5 18.5" stroke="#fff" stroke-width="3.6"/></svg>
<div class="t" style="left:915.30px;top:771.45px;font-size:14px;line-height:14px;color:#111;letter-spacing:0.2px;"><u>C</u>ancelar</div>
<div class="a" style="left:991px;top:759px;width:113px;height:36px;border:1px solid #adadad;background:linear-gradient(180deg,#eaeaea,#e2e2e2);box-shadow:inset 1px 1px 0 #f8f8f8;"></div>
<svg class="a" style="left:1019px;top:762px" width="27" height="29" viewBox="0 0 27 29"><path d="M1 3 L10 6 L10 28 L1 24 Z" fill="#0f6fb8"/>
<path d="M7 3 L17 3 L17 9 M17 18 L17 23 L10 23" fill="none" stroke="#0f6fb8" stroke-width="2"/>
<path d="M12 11 L19 11 L19 7.5 L25 13.5 L19 19.5 L19 16 L12 16 Z" fill="#0f6fb8"/></svg>
<div class="t" style="left:1053.30px;top:771.45px;font-size:14px;line-height:14px;color:#111;letter-spacing:0.4px;"><u>S</u>air</div>
<div class="a" style="left:1109px;top:759px;width:113px;height:36px;border:1px solid #adadad;background:linear-gradient(180deg,#eaeaea,#e2e2e2);box-shadow:inset 1px 1px 0 #f8f8f8;"></div>
<svg class="a" style="left:1130px;top:763px" width="27" height="27" viewBox="0 0 27 27"><circle cx="13.5" cy="13.5" r="13" fill="#0f6fb8"/><path d="M9.2 10.5 C9.2 7 11 5.5 13.8 5.5 C16.6 5.5 18.5 7.5 18.5 10 C18.5 13 15.5 13.5 15.5 16.5 L15.5 17" fill="none" stroke="#fff" stroke-width="2.8"/><rect x="13.8" y="19" width="3.2" height="3.2" fill="#fff"/></svg>
<div class="t" style="left:1164.60px;top:771.45px;font-size:14px;line-height:14px;color:#111;letter-spacing:0.4px;">Aj<u>u</u>da</div>
</body></html>
